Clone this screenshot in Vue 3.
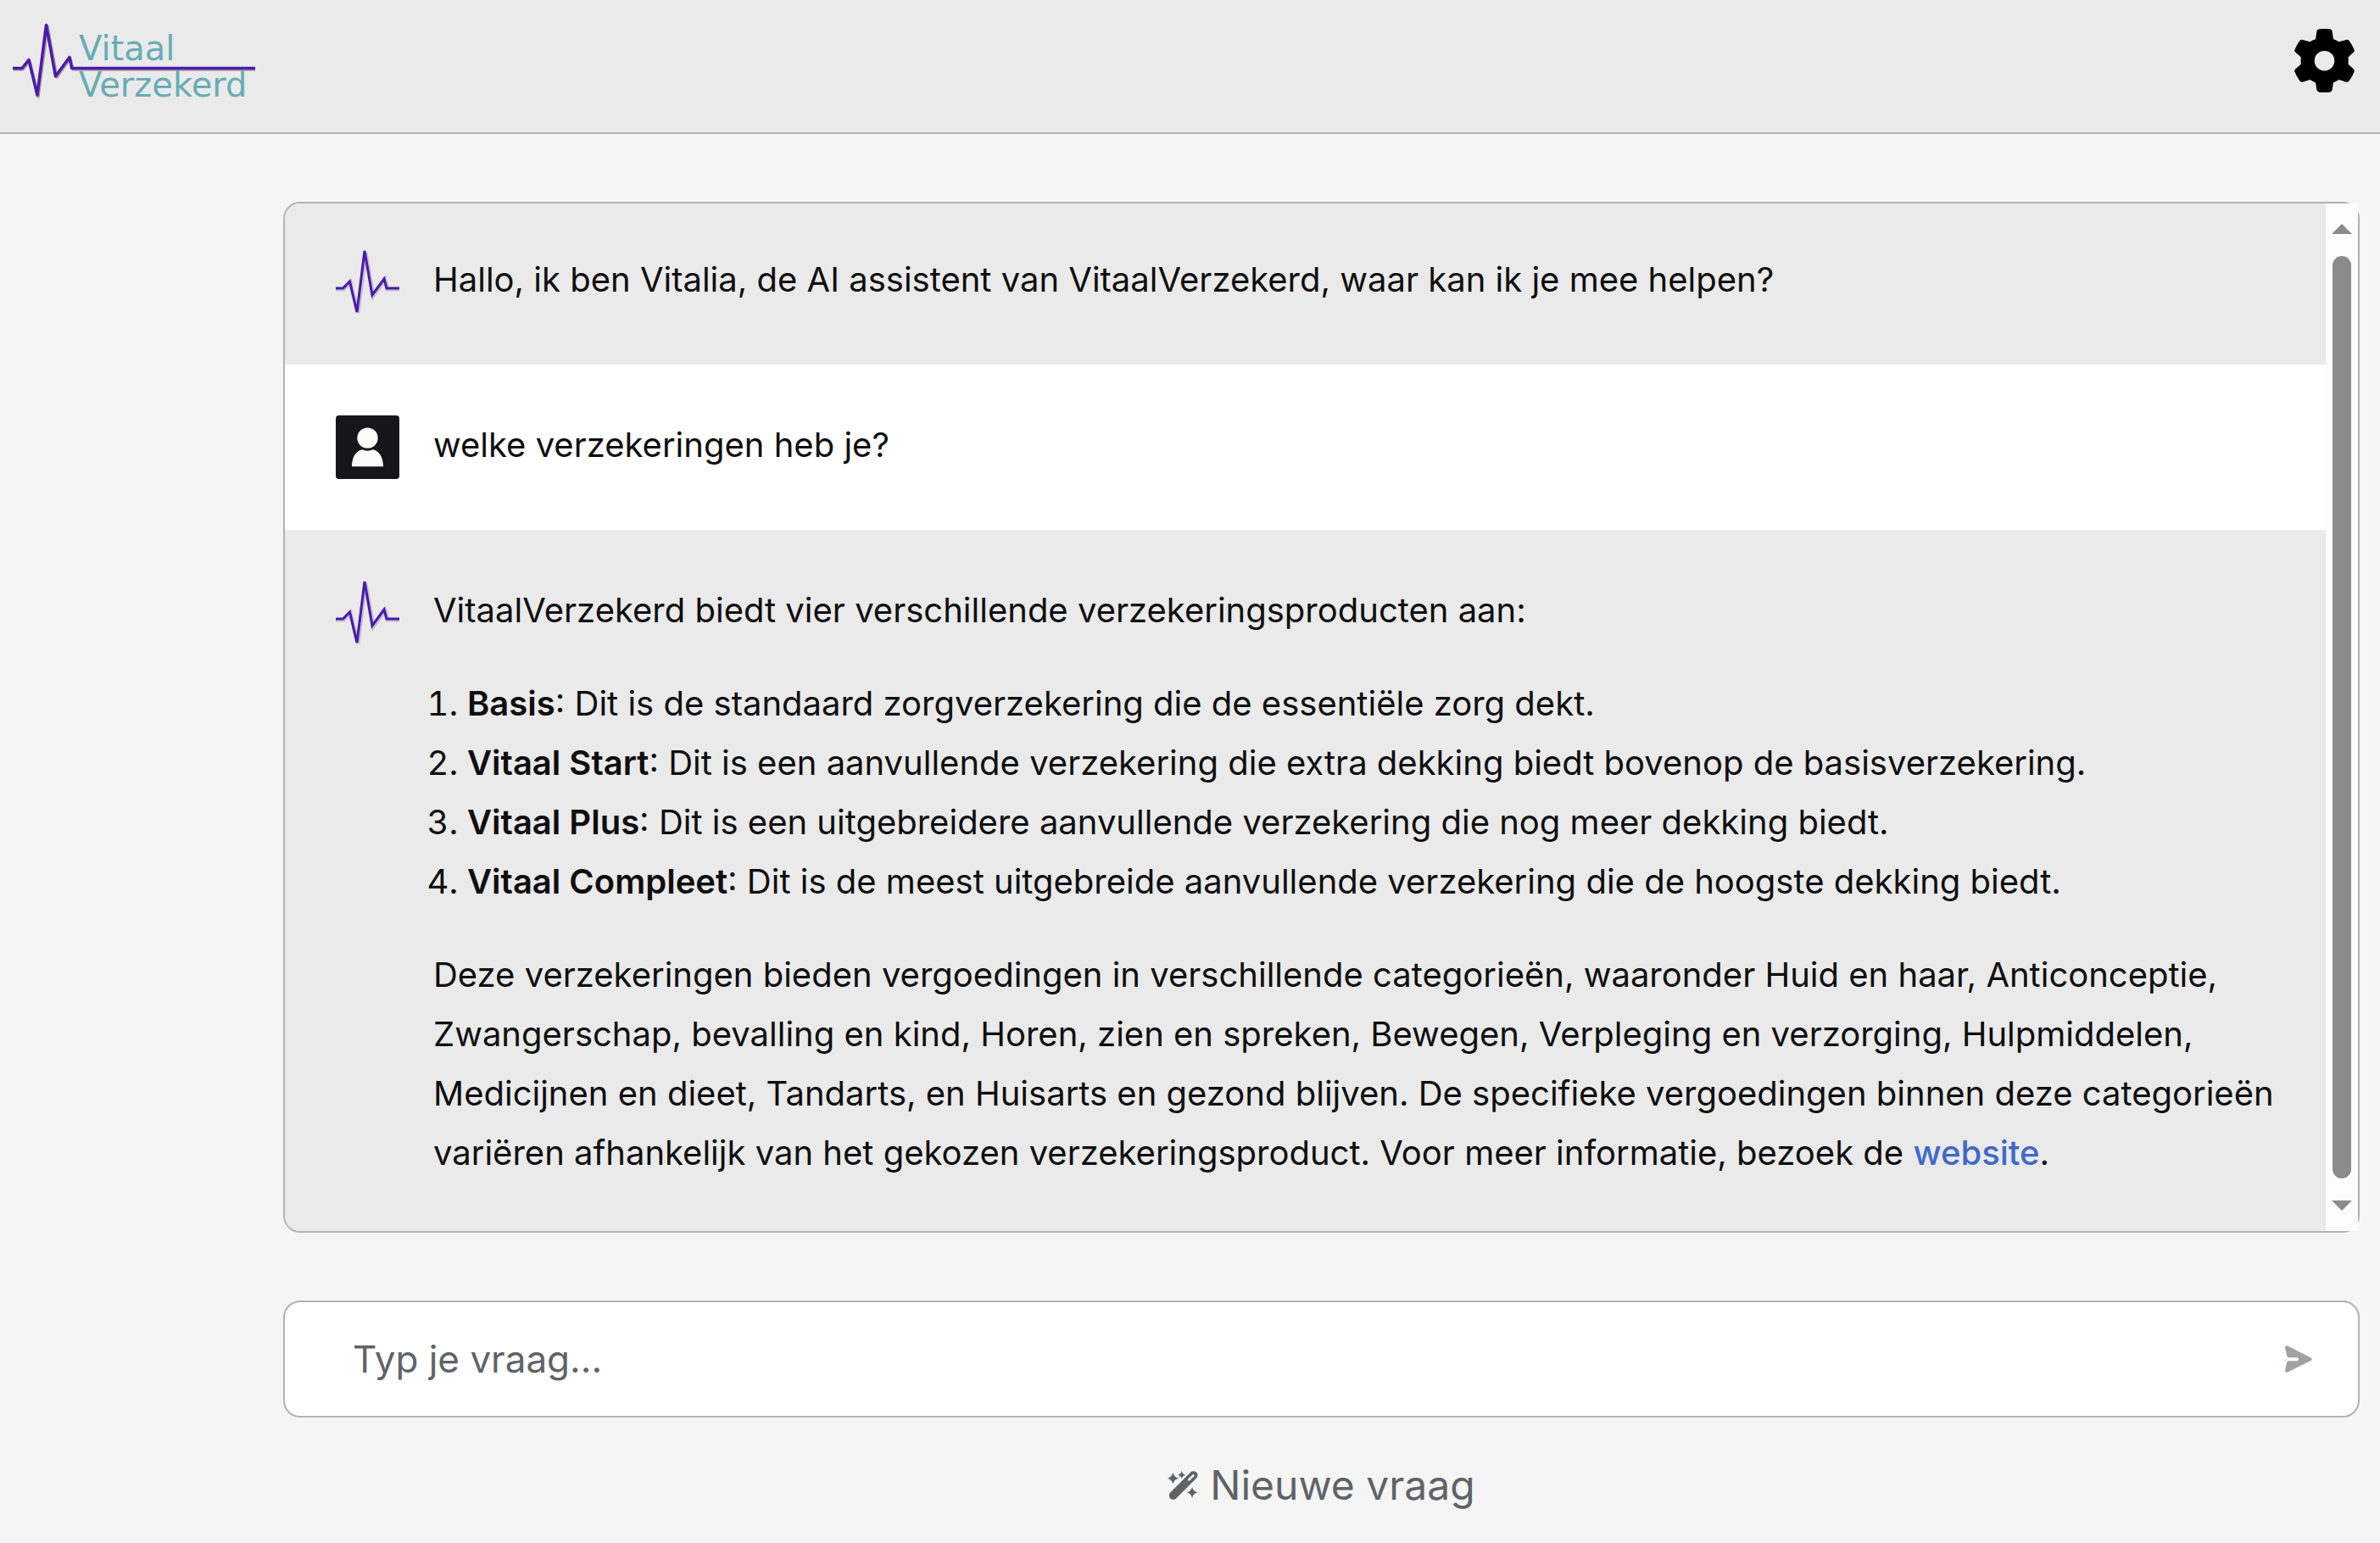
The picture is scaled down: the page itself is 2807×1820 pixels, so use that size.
<script setup>
import { ref } from 'vue'

const question = ref('')

const products = [
  { name: 'Basis', text: 'Dit is de standaard zorgverzekering die de essentiële zorg dekt.' },
  { name: 'Vitaal Start', text: 'Dit is een aanvullende verzekering die extra dekking biedt bovenop de basisverzekering.' },
  { name: 'Vitaal Plus', text: 'Dit is een uitgebreidere aanvullende verzekering die nog meer dekking biedt.' },
  { name: 'Vitaal Compleet', text: 'Dit is de meest uitgebreide aanvullende verzekering die de hoogste dekking biedt.' },
]
</script>

<template>
  <div class="app">
    <header class="topbar">
      <a class="brand" href="#" aria-label="Vitaal Verzekerd">
        <svg class="logo" viewBox="0 0 310 130">
          <g fill="none" stroke-width="3.500" stroke-linejoin="round">
            <path class="shadow" d="M16 82H27L35 72L45 114L56 31L67 91L83 69L86 82H301" />
            <path class="pulse" d="M15 80.500H26L34 70.500L44 112L54.500 29.500L65.500 90L82 67.500L84.700 80.500H301" />
          </g>
          <text x="93" y="71">Vitaal</text>
          <text x="93" y="114">Verzekerd</text>
        </svg>
      </a>
      <button class="settings" type="button" aria-label="Instellingen">
        <svg viewBox="138 101 213 226">
          <path
            fill-rule="evenodd"
            d="M213 138L217 109Q219 103 226 102Q245 100 264 102Q270 103 272 109L276 137Q287 141 296 147L322 140Q328 138 332 143Q344 158 351 177Q351 181 348 184L329 202Q330 214 329 227L348 244Q351 247 351 252Q344 271 332 286Q328 291 322 290L296 282Q287 288 276 292L272 318Q270 325 264 326Q245 328 226 326Q219 325 217 319L213 292Q202 288 193 282L167 290Q161 291 157 286Q145 271 138 252Q138 247 141 244L161 227Q160 214 161 202L141 184Q138 181 138 177Q145 158 157 143Q161 138 167 140L193 147Q202 141 213 138ZM244.500 179A35.500 35.500 0 1 0 244.500 250A35.500 35.500 0 1 0 244.500 179Z"
          />
        </svg>
      </button>
    </header>

    <main class="main">
      <section class="chat" aria-label="Gesprek">
        <div class="messages">
          <article class="message bot first">
            <svg class="avatar" viewBox="0 0 75 75">
              <g fill="none" stroke-width="3">
                <path class="glow" d="M0 46H9L17 38L26 74L35 3L44 54L58 35L61 46H75" />
                <path class="pulse" d="M0 45H8.500L16.500 37L25 73L34 1L43 53L57 34L60 45H75" />
              </g>
            </svg>
            <div class="body">
              <p>Hallo, ik ben Vitalia, de AI assistent van VitaalVerzekerd, waar kan ik je mee helpen?</p>
            </div>
          </article>

          <article class="message user">
            <svg class="avatar" viewBox="0 0 225 225">
              <rect width="225" height="225" rx="11" fill="#15161a" />
              <g fill="#fcfbf9">
                <circle cx="112.500" cy="80" r="36.500" />
                <path d="M57 181C57 149 70 128 93 121Q112 129 132 121C155 128 168 149 168 181Z" />
              </g>
            </svg>
            <div class="body">
              <p>welke verzekeringen heb je?</p>
            </div>
          </article>

          <article class="message bot last">
            <svg class="avatar" viewBox="0 0 75 75">
              <g fill="none" stroke-width="3">
                <path class="glow" d="M0 46H9L17 38L26 74L35 3L44 54L58 35L61 46H75" />
                <path class="pulse" d="M0 45H8.500L16.500 37L25 73L34 1L43 53L57 34L60 45H75" />
              </g>
            </svg>
            <div class="body">
              <p>VitaalVerzekerd biedt vier verschillende verzekeringsproducten aan:</p>
              <ol>
                <li v-for="product in products" :key="product.name">
                  <strong>{{ product.name }}</strong>: {{ product.text }}
                </li>
              </ol>
              <p>
                Deze verzekeringen bieden vergoedingen in verschillende categorieën, waaronder Huid en haar,
                Anticonceptie, Zwangerschap, bevalling en kind, Horen, zien en spreken, Bewegen, Verpleging en
                verzorging, Hulpmiddelen, Medicijnen en dieet, Tandarts, en Huisarts en gezond blijven. De
                specifieke vergoedingen binnen deze categorieën variëren afhankelijk van het gekozen
                verzekeringsproduct. Voor meer informatie, bezoek de <a href="#">website</a>.
              </p>
            </div>
          </article>
        </div>

        <div class="scrollbar" aria-hidden="true">
          <svg class="arrow" viewBox="0 0 24 12"><path d="M12 0L24 12H0Z" /></svg>
          <div class="thumb"></div>
          <svg class="arrow" viewBox="0 0 24 12"><path d="M0 0H24L12 12Z" /></svg>
        </div>
      </section>

      <form class="composer" @submit.prevent>
        <input v-model="question" type="text" placeholder="Typ je vraag..." aria-label="Typ je vraag" />
        <button class="send" type="submit" aria-label="Verstuur">
          <svg viewBox="285 851 97 97">
            <path d="M293 852L378 895Q385 900 378 905L293 947Q285 949 285 941L291 912Q293 906 298 906H328Q333 906 333 900Q333 894 328 894H298Q293 893 292 888L285 859Q285 850 293 852Z" />
          </svg>
        </button>
      </form>

      <button class="reset" type="button">
        <svg viewBox="114 158 108 102">
          <path d="M134 245L206 173" stroke="#5f6368" stroke-width="29" stroke-linecap="round" />
          <path d="M190 189L205 174" stroke="#f5f5f5" stroke-width="8" stroke-linecap="round" />
          <g fill="#5f6368">
            <path d="M133 164Q137 180 153 184Q137 188 133 204Q129 188 114 184Q129 180 133 164Z" />
            <path d="M164 158Q167 169 177 172Q167 175 164 185Q161 175 151 172Q161 169 164 158Z" />
            <path d="M201 215Q205 231 221 234Q205 238 201 254Q197 238 182 234Q197 231 201 215Z" />
          </g>
        </svg>
        <span>Nieuwe vraag</span>
      </button>
    </main>
  </div>
</template>

<style>
body {
  margin: 0;
  background: #f5f5f5;
}
</style>

<style scoped>
.app {
  font-family: Inter, "Liberation Sans", sans-serif;
  font-weight: 380;
  font-size: 40px;
  line-height: 70px;
  color: #0e0e0e;
}

button {
  border: 0;
  padding: 0;
  background: none;
  font: inherit;
  color: inherit;
  cursor: pointer;
}

svg {
  display: block;
}

.topbar {
  display: flex;
  justify-content: space-between;
  align-items: flex-start;
  height: 156px;
  padding-right: 30px;
  background: #eaeaea;
  border-bottom: 2px solid #b2b2b2;
}

.logo {
  width: 310px;
  height: 130px;
}

.logo text {
  font-family: "DejaVu Sans", sans-serif;
  font-size: 40px;
  font-weight: 400;
  fill: #68adb6;
}

.pulse {
  stroke: #4a1aaf;
}

.shadow {
  stroke: #a8a094;
}

.glow {
  stroke: #8c8296;
  stroke-width: 5px;
  opacity: 0.4;
}

.settings {
  padding-top: 34px;
}

.settings svg {
  width: 71px;
  height: 75px;
}

.main {
  display: flex;
  flex-direction: column;
  padding: 80px 24px 30px 334px;
}

.chat {
  display: flex;
  border: 2px solid #b2b2b2;
  border-radius: 20px;
}

.messages {
  flex: 1;
  min-width: 0;
  overflow: hidden;
  border-radius: 18px 0 0 18px;
}

.message {
  display: flex;
  gap: 40px;
  padding: 60px;
}

.bot {
  background: #eaeaea;
}

.user {
  background: #fff;
}

.first {
  padding-top: 55px;
}

.last {
  padding-bottom: 57px;
}

.avatar {
  flex: none;
  width: 75px;
  height: 75px;
}

.body {
  flex: 1;
  min-width: 0;
}

.body p,
.body ol {
  margin: 0;
}

.body ol {
  margin: 40px 0;
  padding-left: 40px;
}

strong {
  font-weight: 600;
}

.body a {
  color: #4169c8;
  font-weight: 500;
  text-decoration: none;
}

.scrollbar {
  display: flex;
  flex-direction: column;
  align-items: center;
  gap: 26px;
  width: 38px;
  padding: 24px 0;
  box-sizing: border-box;
  background: #fcfcfc;
}

.arrow {
  width: 24px;
  height: 12px;
  fill: #8b8b8b;
}

.thumb {
  flex: 1;
  width: 22px;
  border-radius: 11px;
  background: #8b8b8b;
}

.composer {
  display: flex;
  align-items: center;
  height: 134px;
  margin-top: 80px;
  padding: 0 54px 0 80px;
  background: #fff;
  border: 2px solid #b2b2b2;
  border-radius: 20px;
}

.composer input {
  flex: 1;
  min-width: 0;
  border: 0;
  padding: 0;
  outline: 0;
  background: none;
  font: inherit;
  font-size: 44px;
  color: inherit;
}

.composer input::placeholder {
  color: #5f6368;
  opacity: 1;
}

.send svg {
  width: 32px;
  height: 32px;
  fill: #a2a0a2;
}

.reset {
  display: flex;
  align-items: center;
  align-self: center;
  gap: 14px;
  margin-top: 50px;
  font-size: 48px;
  line-height: 60px;
  color: #5f6368;
}

.reset svg {
  width: 36px;
  height: 34px;
}
</style>
